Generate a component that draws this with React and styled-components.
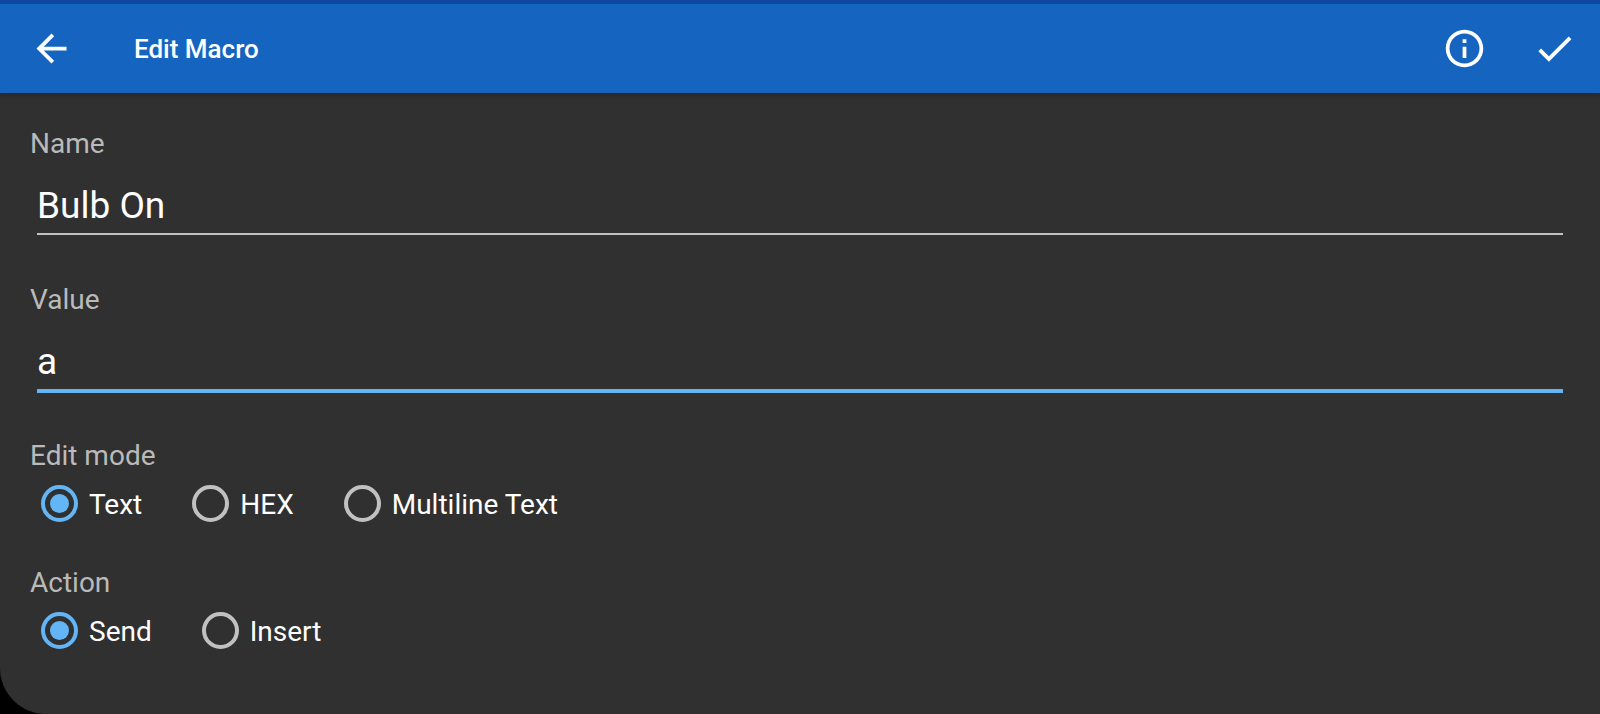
import { useState } from "react";
import styled, { createGlobalStyle } from "styled-components";

const colors = {
  statusBar: "#0d47a1",
  primary: "#1565c0",
  background: "#303030",
  accent: "#64b5f6",
  text: "#ffffff",
  secondary: "#c1c1c1",
  label: "#bababa",
};

function IconButton({ label, path }) {
  return (
    <BarButton type="button" aria-label={label}>
      <svg viewBox="0 0 24 24" width="45" height="45" fill="currentColor">
        <path d={path} />
      </svg>
    </BarButton>
  );
}

function TextField({ id, label, value, onChange, active }) {
  return (
    <Field>
      <FieldLabel htmlFor={id}>{label}</FieldLabel>
      <FieldInput
        id={id}
        type="text"
        value={value}
        $active={active}
        onChange={(e) => onChange(e.target.value)}
      />
    </Field>
  );
}

function RadioGroup({ name, label, options, value, onChange }) {
  return (
    <Group role="radiogroup" aria-labelledby={`${name}-label`}>
      <GroupLabel id={`${name}-label`}>{label}</GroupLabel>
      <Options>
        {options.map((option) => (
          <Option key={option}>
            <Radio
              type="radio"
              name={name}
              value={option}
              checked={value === option}
              onChange={() => onChange(option)}
            />
            <OptionText>{option}</OptionText>
          </Option>
        ))}
      </Options>
    </Group>
  );
}

function App() {
  const [name, setName] = useState("Bulb On");
  const [macro, setMacro] = useState("a");
  const [mode, setMode] = useState("Text");
  const [action, setAction] = useState("Send");

  return (
    <>
      <GlobalStyle />
      <Screen>
        <AppBar>
          <IconButton
            label="Back"
            path="M20 11H7.83l5.59-5.59L12 4l-8 8 8 8 1.41-1.41L7.83 13H20v-2z"
          />
          <Title>Edit Macro</Title>
          <Actions>
            <IconButton
              label="Info"
              path="M11 7h2v2h-2zm0 4h2v6h-2zm1-9C6.48 2 2 6.48 2 12s4.48 10 10 10 10-4.48 10-10S17.52 2 12 2zm0 18c-4.41 0-8-3.59-8-8s3.59-8 8-8 8 3.59 8 8-3.59 8-8 8z"
            />
            <IconButton
              label="Save"
              path="M9 16.17L4.83 12l-1.42 1.41L9 19 21 7l-1.41-1.41z"
            />
          </Actions>
        </AppBar>
        <Form>
          <TextField id="name" label="Name" value={name} onChange={setName} />
          <TextField
            id="value"
            label="Value"
            value={macro}
            onChange={setMacro}
            active
          />
          <RadioGroup
            name="mode"
            label="Edit mode"
            options={["Text", "HEX", "Multiline Text"]}
            value={mode}
            onChange={setMode}
          />
          <RadioGroup
            name="action"
            label="Action"
            options={["Send", "Insert"]}
            value={action}
            onChange={setAction}
          />
        </Form>
      </Screen>
    </>
  );
}

// design

const GlobalStyle = createGlobalStyle`
  * {
    box-sizing: border-box;
  }
  body {
    margin: 0;
    background-color: #000000;
    font-family: Roboto, "Noto Sans", sans-serif;
  }
`;

const Screen = styled.div`
  display: flex;
  flex-direction: column;
  min-height: 100vh;
  background-color: ${colors.background};
  border-bottom-left-radius: 46px;
`;

const AppBar = styled.header`
  display: flex;
  align-items: center;
  padding: 22px 23px 22px 29px;
  border-top: 4px solid ${colors.statusBar};
  background-color: ${colors.primary};
  box-shadow: 0 1px 4px rgba(0, 0, 0, 0.3);
`;

const BarButton = styled.button`
  display: flex;
  padding: 0;
  border: none;
  background: none;
  color: ${colors.text};
  cursor: pointer;
`;

const Title = styled.h1`
  margin: 0 0 0 60px;
  color: ${colors.text};
  font-size: 26px;
  font-weight: 500;
  line-height: 32px;
`;

const Actions = styled.div`
  display: flex;
  gap: 45px;
  margin-left: auto;
`;

const Form = styled.form`
  padding: 35px 30px 0;
`;

const Field = styled.div`
  display: flex;
  flex-direction: column;
  min-height: 156px;
`;

const FieldLabel = styled.label`
  color: ${colors.label};
  font-size: 28px;
  line-height: 32px;
`;

const FieldInput = styled.input`
  margin: 24px 7px 0;
  padding: 0 0 5px;
  border: none;
  border-bottom: ${({ $active }) =>
    $active ? `4px solid ${colors.accent}` : `2px solid ${colors.secondary}`};
  border-radius: 0;
  outline: none;
  background: none;
  color: ${colors.text};
  font-family: inherit;
  font-size: 37px;
  line-height: 44px;
`;

const Group = styled.div`
  display: flex;
  flex-direction: column;
  gap: 13px;
  min-height: 127px;
`;

const GroupLabel = styled.span`
  color: ${colors.label};
  font-size: 28px;
  line-height: 32px;
`;

const Options = styled.div`
  display: flex;
  flex-wrap: wrap;
  gap: 50px;
  padding-left: 11px;
`;

const Option = styled.label`
  display: flex;
  align-items: center;
  gap: 11px;
  cursor: pointer;
`;

const OptionText = styled.span`
  padding-top: 2px;
  color: ${colors.text};
  font-size: 28px;
  line-height: 32px;
`;

const Radio = styled.input`
  display: grid;
  place-content: center;
  flex: none;
  width: 37px;
  height: 37px;
  margin: 0;
  border: 4px solid ${colors.secondary};
  border-radius: 50%;
  appearance: none;
  cursor: pointer;

  &:checked {
    border-color: ${colors.accent};
  }

  &:checked::before {
    width: 19px;
    height: 19px;
    border-radius: 50%;
    background-color: ${colors.accent};
    content: "";
  }
`;

export default App;
